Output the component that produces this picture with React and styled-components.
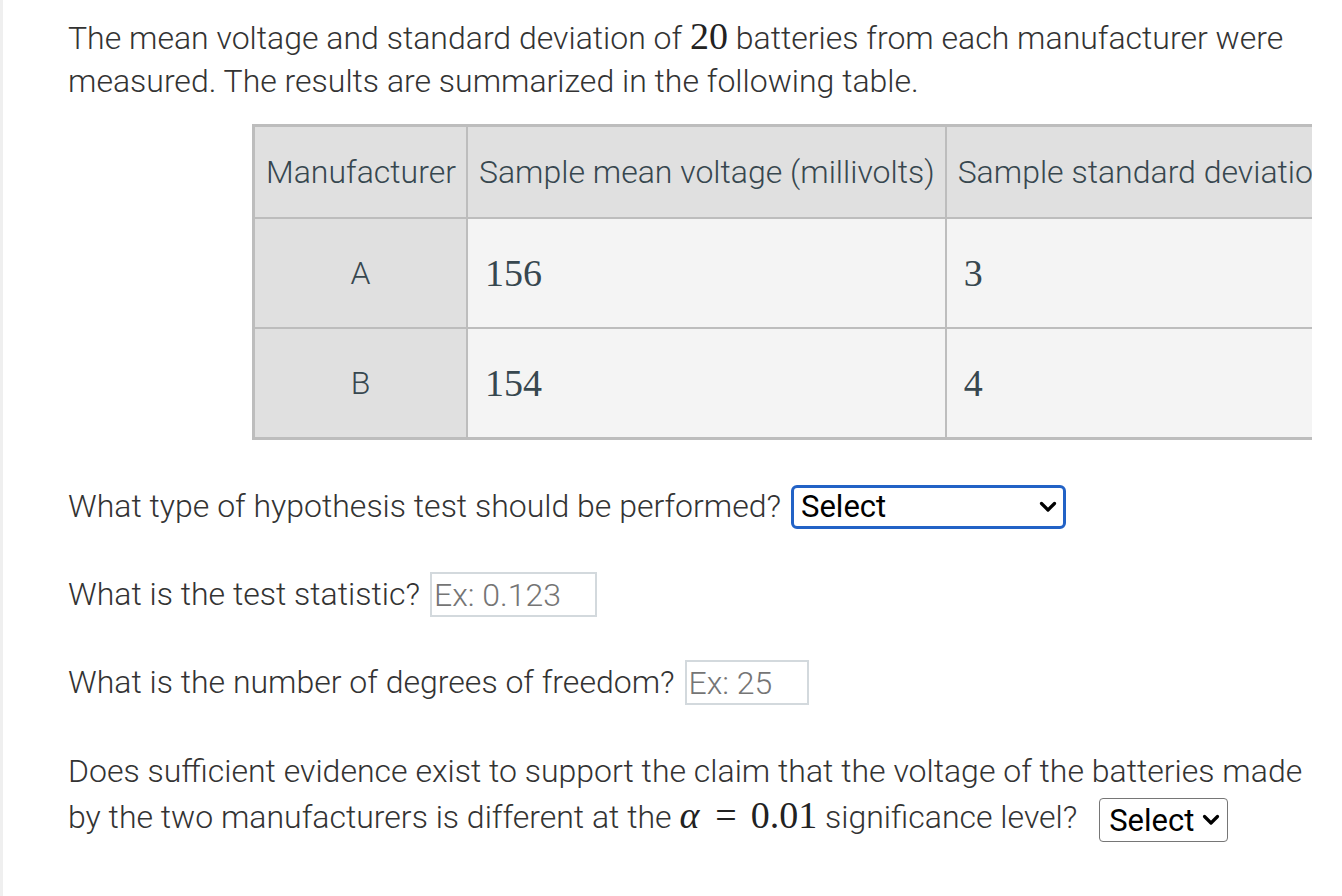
import React from "react";
import styled, { createGlobalStyle } from "styled-components";

const Global = createGlobalStyle`
  html, body { margin: 0; padding: 0; background: #fff; }
  body { font-family: Roboto, "Noto Sans", Arial, sans-serif; }
`;

const Page = styled.div`
  border-left: 3px solid #efefef;
  min-height: 896px;
  box-sizing: border-box;
  padding: 15px 30px 0 65px;
  color: #333;
  font-size: 32px;
  line-height: 43px;
  font-weight: 300;
`;

const Para = styled.p`
  margin: 0;
`;

const MathText = styled.span`
  font-family: "Liberation Serif", "Times New Roman", serif;
  font-size: 38px;
  font-style: ${(p) => (p.$italic ? "italic" : "normal")};
  color: #222;
`;

const Eq = styled.span`
  font-family: "Liberation Serif", "Times New Roman", serif;
  font-size: 38px;
  margin: 0 14px 0 16px;
  color: #222;
`;

const TableScroll = styled.div`
  margin: 21px 0 0 184px;
  overflow: hidden;
`;

const Table = styled.table`
  border-collapse: collapse;
  border: 3px solid #bdbdbd;
  color: #37474f;
  white-space: nowrap;
`;

const HeadCell = styled.th`
  background: #e0e0e0;
  border: 2px solid #bdbdbd;
  font-weight: 300;
  text-align: left;
  padding: 0 10px 0 11px;
  height: 90px;
  font-size: 32px;
`;

const RowHead = styled.td`
  background: #e0e0e0;
  border: 2px solid #bdbdbd;
  text-align: center;
  height: 108px;
  padding: 0 11px;
  font-size: 32px;
`;

const DataCell = styled.td`
  background: #f4f4f4;
  border: 2px solid #bdbdbd;
  text-align: left;
  padding: 0 11px 0 17px;
  height: 108px;
  font-family: "Liberation Serif", "Times New Roman", serif;
  font-size: 38px;
  color: #37474f;
`;

const Question = styled.div`
  display: flex;
  align-items: center;
  gap: 10px;
  min-height: 45px;
  margin-top: ${(p) => p.$top}px;
`;

const SelectWrap = styled.span`
  position: relative;
  display: inline-block;
  vertical-align: middle;
  width: ${(p) => p.$w}px;
  height: 44px;
  margin: ${(p) => (p.$inline ? "-5px" : "0")} 0 ${(p) => (p.$inline ? "-5px" : "0")} ${(p) => p.$ml || 0}px;
`;

const Select = styled.select`
  appearance: none;
  -webkit-appearance: none;
  font-family: Roboto, Arial, sans-serif;
  font-size: 31px;
  font-weight: 400;
  color: #000;
  background: #fff;
  height: 44px;
  width: 100%;
  box-sizing: border-box;
  padding: 0 0 0 ${(p) => (p.$focus ? 7 : 9)}px;
  border: ${(p) => (p.$focus ? "3px solid #2262c6" : "1.5px solid #767676")};
  border-radius: ${(p) => (p.$focus ? "6px" : "4px")};
  outline: none;
  margin: 0;
`;

const Chevron = styled.svg`
  position: absolute;
  right: ${(p) => p.$right}px;
  top: 13px;
  width: 18px;
  height: 18px;
  pointer-events: none;
`;

const Input = styled.input`
  font-family: Roboto, Arial, sans-serif;
  font-size: 32px;
  font-weight: 300;
  width: ${(p) => p.$w}px;
  height: 45px;
  box-sizing: border-box;
  border: 2px solid #d3d9dd;
  padding: 0 2px;
  color: #333;
  outline: none;
  margin: 0;
  &::placeholder { color: #757575; }
`;

const FinalPara = styled.p`
  margin: 44px 0 0;
  line-height: 44px;
`;

const rows = [
  { m: "A", mean: "156", sd: "3" },
  { m: "B", mean: "154", sd: "4" },
];

function Dropdown({ width, focus, right, ml, inline, options }) {
  return (
    <SelectWrap $w={width} $ml={ml} $inline={inline}>
      <Select $focus={focus} defaultValue="">
        <option value="">Select</option>
        {options.map((o) => (
          <option key={o}>{o}</option>
        ))}
      </Select>
      <Chevron $right={right} viewBox="0 0 18 18">
        <path d="M2.5 5.5 L9 12 L15.5 5.5" fill="none" stroke="#000" strokeWidth="3.2" strokeLinecap="round" strokeLinejoin="round" />
      </Chevron>
    </SelectWrap>
  );
}

export default function App() {
  return (
    <Page>
      <Global />
      <Para>
        The mean voltage and standard deviation of <MathText>20</MathText> batteries from each manufacturer were
        measured. The results are summarized in the following table.
      </Para>
      <TableScroll>
        <Table>
          <thead>
            <tr>
              <HeadCell>Manufacturer</HeadCell>
              <HeadCell>Sample mean voltage (millivolts)</HeadCell>
              <HeadCell>Sample standard deviation (millivolts)</HeadCell>
            </tr>
          </thead>
          <tbody>
            {rows.map((r) => (
              <tr key={r.m}>
                <RowHead>{r.m}</RowHead>
                <DataCell>{r.mean}</DataCell>
                <DataCell>{r.sd}</DataCell>
              </tr>
            ))}
          </tbody>
        </Table>
      </TableScroll>
      <Question $top={44}>
        <span>What type of hypothesis test should be performed?</span>
        <Dropdown width={275} focus right={9} options={["Two-sample t-test for two independent means", "Paired t-test"]} />
      </Question>
      <Question $top={43}>
        <span>What is the test statistic?</span>
        <Input $w={167} placeholder="Ex: 0.123" />
      </Question>
      <Question $top={43}>
        <span>What is the number of degrees of freedom?</span>
        <Input $w={124} placeholder="Ex: 25" />
      </Question>
      <FinalPara>
        Does sufficient evidence exist to support the claim that the voltage of the batteries made
        by the two manufacturers is different at the <MathText $italic>α</MathText>
        <Eq>=</Eq>
        <MathText>0.01</MathText> significance level?{" "}
        <Dropdown width={129} right={8} ml={14} inline options={["Yes", "No"]} />
      </FinalPara>
    </Page>
  );
}
